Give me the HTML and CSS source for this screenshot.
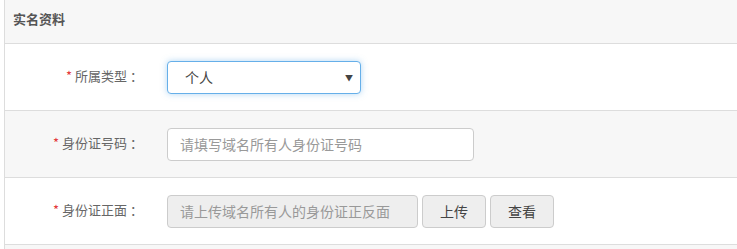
FILE: index.html
```html
<!DOCTYPE html>
<html lang="zh-CN">
<head>
    <meta charset="UTF-8">
    <title>实名资料</title>
    <link rel="stylesheet" href="styles.css">
</head>
<body>
    <div class="panel">
        <div class="panel-heading">实名资料</div>
        <div class="form-row">
            <label class="form-label"><span class="required">*</span>所属类型 ：</label>
            <div class="select-box">
                <span>个人</span>
                <span class="caret">▼</span>
            </div>
        </div>
        <div class="form-row alt">
            <label class="form-label"><span class="required">*</span>身份证号码 ：</label>
            <input type="text" class="input-field wide" placeholder="请填写域名所有人身份证号码">
        </div>
        <div class="form-row">
            <label class="form-label"><span class="required">*</span>身份证正面 ：</label>
            <input type="text" class="input-field short" placeholder="请上传域名所有人的身份证正反面" disabled>
            <button class="btn">上传</button>
            <button class="btn">查看</button>
        </div>
        <div class="panel-rest"></div>
    </div>
</body>
</html>
```

FILE: styles.css
```css
body {
    margin: 0;
    padding: 0 0 0 4px;
    background-color: #fff;
    font-family: "Noto Sans CJK SC", "Microsoft YaHei", sans-serif;
    font-size: 13px;
    color: #555;
}

.panel {
    border-left: 1px solid #ddd;
}

.panel-heading {
    height: 43px;
    line-height: 38px;
    padding-left: 8px;
    background-color: #f7f7f7;
    border-bottom: 1px solid #ddd;
    font-weight: bold;
    font-size: 13px;
    color: #555;
}

.form-row {
    display: flex;
    align-items: center;
    height: 66px;
    border-bottom: 1px solid #ddd;
    background-color: #fff;
}

.form-row.alt {
    background-color: #f7f7f7;
}

.form-label {
    width: 162px;
    padding-right: 24px;
    padding-bottom: 3px;
    box-sizing: border-box;
    text-align: right;
    color: #666;
}

.required {
    color: #e4393c;
    margin-right: 3px;
}

.select-box {
    display: flex;
    justify-content: space-between;
    align-items: center;
    width: 194px;
    height: 33px;
    padding: 0 7px 0 17px;
    box-sizing: border-box;
    border: 1px solid #66afe9;
    border-radius: 4px;
    box-shadow: 0 0 6px rgba(102, 175, 233, 0.5);
    background-color: #fff;
    font-size: 14px;
    color: #444;
}

.caret {
    font-size: 8px;
    color: #444;
}

.input-field {
    height: 33px;
    padding: 0 12px;
    box-sizing: border-box;
    border: 1px solid #ccc;
    border-radius: 4px;
    font-family: inherit;
    font-size: 14px;
    background-color: #fff;
}

.input-field::placeholder {
    color: #999;
}

.input-field.wide {
    width: 307px;
}

.input-field.short {
    width: 251px;
    background-color: #eee;
}

.btn {
    height: 33px;
    width: 64px;
    margin-left: 4px;
    border: 1px solid #ccc;
    border-radius: 4px;
    background-color: #eee;
    font-family: inherit;
    font-size: 14px;
    color: #444;
}

.panel-rest {
    height: 4px;
    background-color: #f7f7f7;
}
```
